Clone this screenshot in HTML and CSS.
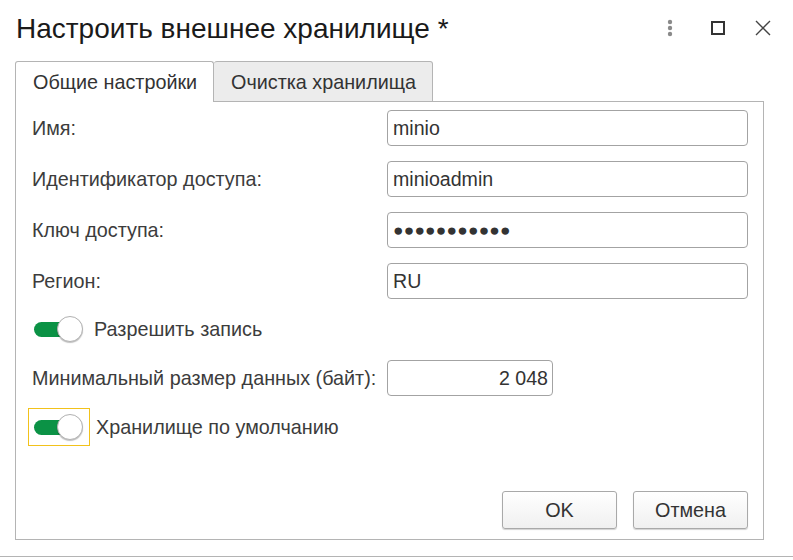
FILE: index.html
```html
<!DOCTYPE html>
<html lang="ru">
<head>
<meta charset="utf-8">
<title>Настроить внешнее хранилище</title>
<link rel="stylesheet" href="styles.css">
</head>
<body>
<div class="window">
  <div class="header">
    <div class="title">Настроить внешнее хранилище *</div>
    <div class="controls">
      <svg class="ico" width="14" height="20" viewBox="0 0 14 20"><circle cx="7" cy="4" r="2.2" fill="#8a8a8a"/><circle cx="7" cy="10" r="2.2" fill="#8a8a8a"/><circle cx="7" cy="16" r="2.2" fill="#8a8a8a"/></svg>
      <svg class="ico" width="14" height="14" viewBox="0 0 14 14"><rect x="1" y="1" width="12" height="12" fill="none" stroke="#333" stroke-width="2"/></svg>
      <svg class="ico" width="16" height="16" viewBox="0 0 16 16"><path d="M1 1L15 15M15 1L1 15" stroke="#444" stroke-width="1.4" fill="none"/></svg>
    </div>
  </div>
  <div class="tabs">
    <div class="tab active">Общие настройки</div>
    <div class="tab">Очистка хранилища</div>
  </div>
  <div class="panel">
    <div class="field"><span class="label">Имя:</span><div class="input">minio</div></div>
    <div class="field"><span class="label">Идентификатор доступа:</span><div class="input">minioadmin</div></div>
    <div class="field"><span class="label">Ключ доступа:</span><div class="input pw">●●●●●●●●●●●</div></div>
    <div class="field"><span class="label">Регион:</span><div class="input">RU</div></div>
    <div class="toggle-row first"><span class="toggle"><span class="knob"></span></span><span class="tlabel">Разрешить запись</span></div>
    <div class="field num-row"><span class="label">Минимальный размер данных (байт):</span><div class="input num">2 048</div></div>
    <div class="toggle-row focused"><span class="focus"><span class="toggle"><span class="knob"></span></span></span><span class="tlabel">Хранилище по умолчанию</span></div>
    <div class="buttons">
      <div class="btn">OK</div>
      <div class="btn">Отмена</div>
    </div>
  </div>
  <div class="bottom-line"></div>
</div>
</body>
</html>
```
FILE: styles.css
```css
* { box-sizing: border-box; }
html, body { margin: 0; padding: 0; background: #fff; }
body { font-family: "Liberation Sans", Arial, sans-serif; color: #333; width: 793px; height: 560px; overflow: hidden; }
.window { width: 793px; height: 560px; display: flex; flex-direction: column; }
.header { height: 61px; display: flex; align-items: flex-start; justify-content: space-between; padding: 13px 0 0 16px; }
.title { font-size: 28px; color: #1a1a1a; line-height: 32px; }
.controls { display: flex; align-items: center; gap: 0; padding-top: 5px; }
.ico { display: block; }
.controls .ico:nth-child(1) { margin-right: 34px; }
.controls .ico:nth-child(2) { margin-right: 30px; }
.controls .ico:nth-child(3) { margin-right: 22px; }
.tabs { display: flex; margin-left: 15px; height: 41px; position: relative; z-index: 1; }
.tab { height: 41px; padding: 0 17px; font-size: 19.8px; line-height: 40px; border: 1px solid #b4b4b4; border-bottom: none; border-radius: 3px 3px 0 0; background: #ececec; color: #333; white-space: nowrap; }
.tab.active { background: #fff; width: 199px; padding-left: 17px; }
.tab:not(.active) { border-left: none; border-bottom: 1px solid #b4b4b4; height: 41px; width: 219px; }
.panel { margin: -1px 29px 0 15px; border: 1px solid #b4b4b4; height: 439px; padding: 8px 15px 10px 16px; display: flex; flex-direction: column; }
.field { display: flex; align-items: center; justify-content: space-between; height: 36px; margin-bottom: 15px; }
.label { font-size: 19.8px; color: #3c3c3c; white-space: nowrap; }
.input { width: 361px; height: 36px; border: 1px solid #a3a3a3; border-radius: 4px; padding: 0 5px; font-size: 19.6px; line-height: 34px; color: #333; }
.input.pw { font-size: 17.4px; letter-spacing: 0.2px; padding-left: 5px; }
.toggle-row { display: flex; align-items: center; height: 41px; }
.toggle-row.first { margin-top: -5px; margin-bottom: 10px; }
.toggle { position: relative; display: inline-block; width: 48px; height: 15px; background: #0b9245; border-radius: 8px; margin-left: 2px; }
.knob { position: absolute; right: -1px; top: -6px; width: 26px; height: 26px; border-radius: 50%; background: #fff; border: 1px solid #b2b2b2; box-shadow: 0 1px 1px rgba(0,0,0,0.25); }
.tlabel { font-size: 19.8px; color: #3c3c3c; margin-left: 12px; white-space: nowrap; }
.num-row { justify-content: flex-start; gap: 8px; margin-bottom: 12px; }
.input.num { width: 166px; text-align: right; padding-right: 4px; margin-left: auto; margin-right: 195px; }
.focused { height: 38px; }
.focus { display: flex; align-items: center; width: 62px; height: 38px; border: 1px solid #f2c21b; margin-left: -4px; padding-left: 4px; }
.focus .toggle { margin-left: 1px; }
.focused .tlabel { margin-left: 6px; }
.buttons { margin-top: auto; display: flex; justify-content: flex-end; gap: 16px; }
.btn { width: 115px; height: 38px; border: 1px solid #a9a9a9; border-radius: 3px; background: linear-gradient(#ffffff, #f0f0f0); box-shadow: 0 1px 1px rgba(0,0,0,0.18); font-size: 19.8px; text-align: center; line-height: 36px; color: #333; }
.bottom-line { margin-top: 16px; height: 1px; background: #b4b4b4; }
```
